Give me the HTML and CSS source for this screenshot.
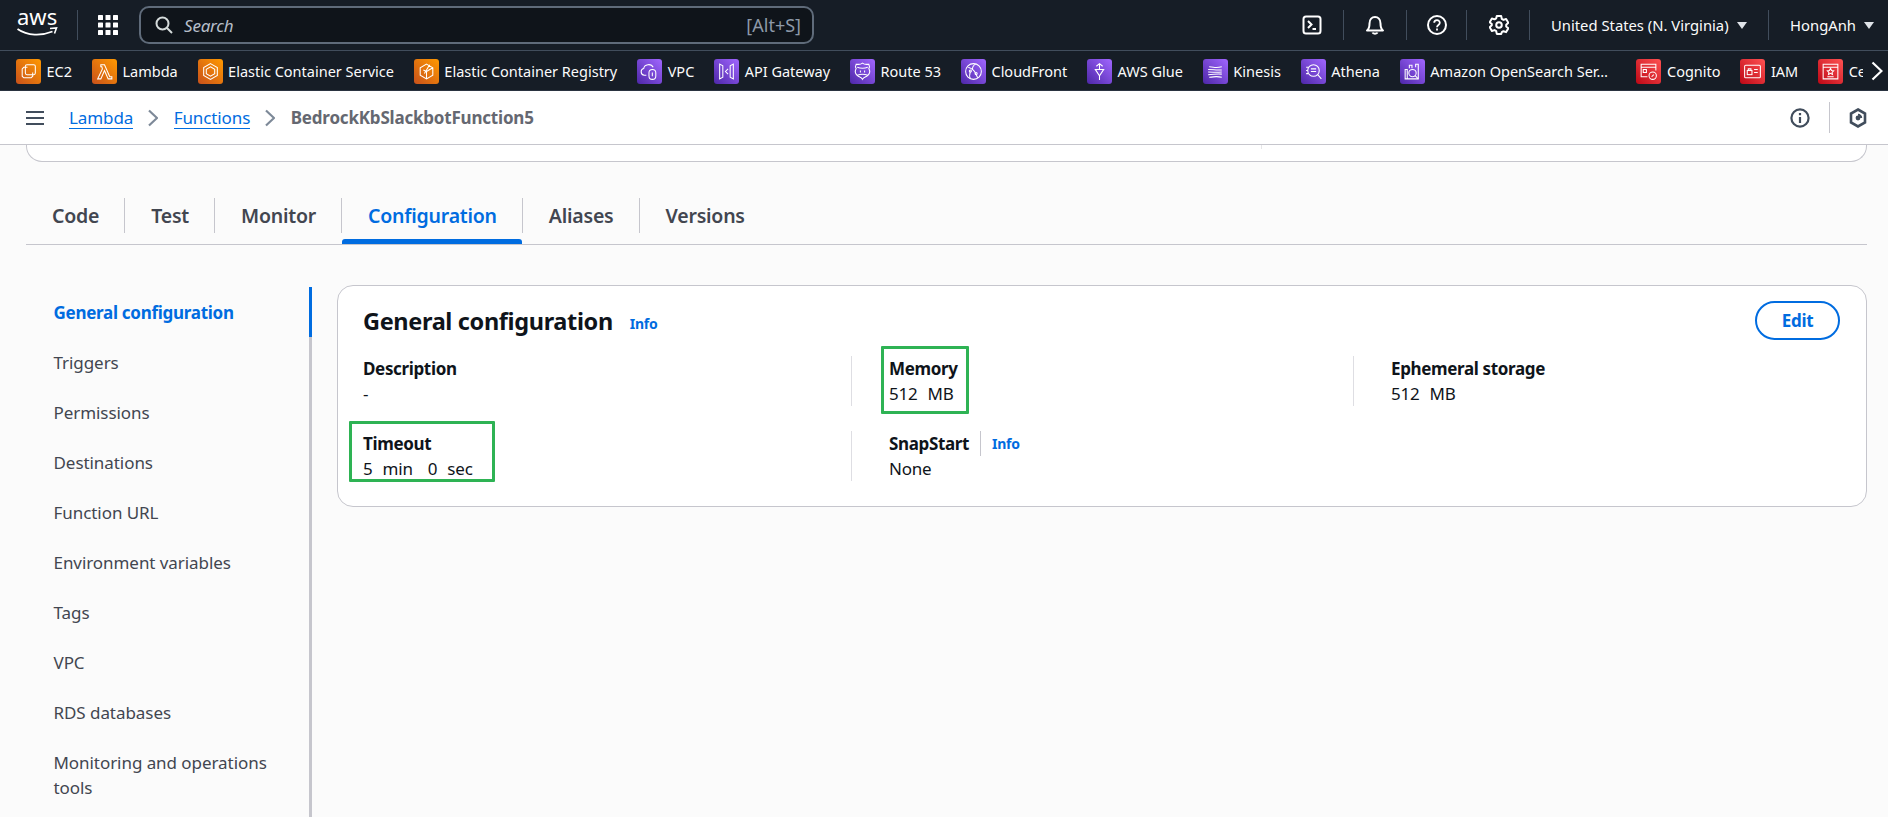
FILE: index.html
```html
<!DOCTYPE html>
<html lang="en">
<head>
<meta charset="utf-8">
<title>Lambda</title>
<link rel="stylesheet" href="styles.css">
</head>
<body>
<header class="topnav">
  <svg class="aws" viewBox="0 0 42 50" width="42" height="50"><text x="0" y="25" class="awstxt">aws</text><path d="M0.500 29c10 7 24 7 35 2.500" fill="none" stroke="#fff" stroke-width="1.800"/><path d="M33 28.500l6.500-.5-2 5.500" fill="none" stroke="#fff" stroke-width="1.600"/></svg>
  <span class="sep sep-logo"></span>
  <svg class="grid" width="20" height="20" viewBox="0 0 20 20" fill="#fff"><rect width="5" height="5" rx=".6"/><rect x="7.500" width="5" height="5" rx=".6"/><rect x="15" width="5" height="5" rx=".6"/><rect y="7.500" width="5" height="5" rx=".6"/><rect x="7.500" y="7.500" width="5" height="5" rx=".6"/><rect x="15" y="7.500" width="5" height="5" rx=".6"/><rect y="15" width="5" height="5" rx=".6"/><rect x="7.500" y="15" width="5" height="5" rx=".6"/><rect x="15" y="15" width="5" height="5" rx=".6"/></svg>
  <div class="search">
    <svg width="18" height="18" viewBox="0 0 18 18" fill="none" stroke="#d5dbdb" stroke-width="2"><circle cx="7.500" cy="7.500" r="6"/><path d="M12 12l5 5"/></svg>
    <span class="search-ph">Search</span>
    <span class="search-key">[Alt+S]</span>
  </div>
  <div class="top-right">
    <svg class="ti" width="20" height="20" viewBox="0 0 20 20" fill="none" stroke="#fff" stroke-width="2"><rect x="1.500" y="1.500" width="17" height="17" rx="2.500"/><path d="M6 6l3.500 3.500L6 13M10.500 14H14"/></svg>
    <span class="sep"></span>
    <svg class="ti" width="20" height="20" viewBox="0 0 20 20" fill="none" stroke="#fff" stroke-width="2"><path d="M2 15.500c2-1.500 2.500-3 2.500-7C4.500 4.500 7 2 10 2s5.500 2.500 5.500 6.500c0 4 .5 5.500 2.500 7z" stroke-linejoin="round"/><path d="M7.500 17.500c.5 1.500 4.500 1.500 5 0" /></svg>
    <span class="sep"></span>
    <svg class="ti ti-help" width="20" height="20" viewBox="0 0 20 20" fill="none" stroke="#fff" stroke-width="2"><circle cx="10" cy="10" r="9"/><path d="M7.200 7.800c0-3.500 5.600-3.500 5.600 0 0 2.200-2.800 2.200-2.800 4.400" stroke-width="1.800"/><path d="M10 13.500v2" stroke-width="1.800"/></svg>
    <span class="sep"></span>
    <svg class="ti ti-gear" width="20" height="20" viewBox="0 0 18 18" fill="none" stroke="#fff" stroke-width="1.800"><path d="M7 1h4l.5 2.500 1.500.9 2.400-.8 2 3.400-1.900 1.700v1.600l1.900 1.700-2 3.400-2.400-.8-1.500.9L11 17H7l-.5-2.500-1.500-.9-2.400.8-2-3.400 1.900-1.700V8.200L.6 6.500l2-3.400 2.400.8 1.500-.9z" stroke-linejoin="round"/><circle cx="9" cy="9" r="2.500"/></svg>
    <span class="sep"></span>
    <span class="top-link">United States (N. Virginia)<i class="caret"></i></span>
    <span class="sep"></span>
    <span class="top-link top-link-last">HongAnh<i class="caret"></i></span>
  </div>
</header>

<nav class="favs">
  <a class="fav"><span class="fi o"><svg viewBox="0 0 20 20"><path d="M9 6H5.500L4 7.500v7L5.500 16h7l1.500-1.500V11"/><rect x="7" y="3.500" width="9.500" height="9.500" rx="1.500"/></svg></span>EC2</a>
  <a class="fav"><span class="fi o"><svg viewBox="0 0 20 20"><path d="M6.500 3.500H10l5 11.500h2v2h-3.500L10 9l-3.500 8H3.500L8 7.500 7.500 5.500h-1z"/></svg></span>Lambda</a>
  <a class="fav"><span class="fi o"><svg viewBox="0 0 20 20"><path d="M10 2.500l6.500 3.800v7.400L10 17.500l-6.500-3.800V6.300z"/><path d="M10 5.500l4 2.300v4.400l-4 2.300-4-2.300V7.800z"/></svg></span>Elastic Container Service</a>
  <a class="fav"><span class="fi o"><svg viewBox="0 0 20 20"><path d="M10 3l6 3.500v7L10 17l-6-3.500v-7zM10 10l6-3.500M10 10v7M7 8.500l3 1.500M13 3.500L8 12"/></svg></span>Elastic Container Registry</a>
  <a class="fav"><span class="fi p"><svg viewBox="0 0 20 20"><path d="M7 13.500H5a3.200 3.200 0 0 1-.5-6.300C5 3 11.500 2 13.500 6"/><rect x="9.500" y="8" width="6.500" height="9.500" rx="3.200"/><path d="M12.700 11v3.500"/></svg></span>VPC</a>
  <a class="fav"><span class="fi p"><svg viewBox="0 0 20 20"><path d="M3.500 3v14l3-1.500v-11zM16.500 3v14l-3-1.500v-11zM11.500 7.500L9 10l2.500 2.500"/></svg></span>API Gateway</a>
  <a class="fav"><span class="fi p"><svg viewBox="0 0 20 20"><path d="M10 2c1.500 1.200 3.500 1.500 6 1 .8 1.500.8 3 0 4 1.500 3 .5 6-2 7.500-1.500.8-3 1-4 3-1-2-2.500-2.200-4-3-2.500-1.500-3.500-4.500-2-7.500-.8-1-.8-2.500 0-4 2.500.5 4.500.2 6-1z"/><path d="M5 6c3 1 7 1 10 0M5 13.500c3-1 7-1 10 0M8 9v2M12 9v2"/></svg></span>Route 53</a>
  <a class="fav"><span class="fi p"><svg viewBox="0 0 20 20"><circle cx="10" cy="10" r="7.500"/><path d="M5 6c3 1 6 3 7 6l2 4M7 10c-1 3-1 5 0 7M12 3c-2 1-3 3-3 5"/><circle cx="7" cy="9.500" r="1"/><circle cx="12.500" cy="12" r="1"/></svg></span>CloudFront</a>
  <a class="fav"><span class="fi p"><svg viewBox="0 0 20 20"><path d="M6 8h8l-4 6zM10 14v4M10 8V3M7 5l3-2.500L13 5"/></svg></span>AWS Glue</a>
  <a class="fav"><span class="fi p"><svg viewBox="0 0 20 20"><path d="M4 5.500c5 0 5 1.500 12 0M3 8c6 0 6 1 13 .5M3 10.500c6 0 6 .5 13 0M3 13c6 0 6-1 13-.5M4 15.500c5 0 5-1.500 12 0"/></svg></span>Kinesis</a>
  <a class="fav"><span class="fi p"><svg viewBox="0 0 20 20"><circle cx="10" cy="9" r="5.500"/><path d="M14 13l3.500 4M7.500 7.500h5M7.500 10h5M3 6h2M3 9h1.500M3 12h2"/></svg></span>Athena</a>
  <a class="fav fav-os"><span class="fi p"><svg viewBox="0 0 20 20"><path d="M3 17V8h2v9zM7 7V4h2.500v3M13 6V3h2.500v14H3"/><circle cx="10" cy="11.500" r="3.500"/><path d="M12.500 14l3 3"/></svg></span>Amazon OpenSearch Ser…</a>
  <a class="fav"><span class="fi r"><svg viewBox="0 0 20 20"><path d="M9 15H3V3h14v6M3 6h14M5 8h3v3H5z"/><circle cx="14" cy="14" r="3.500"/><path d="M13 15l2-2"/></svg></span>Cognito</a>
  <a class="fav"><span class="fi r"><svg viewBox="0 0 20 20"><rect x="2.500" y="4" width="15" height="12" rx="1"/><rect x="5" y="9" width="4.500" height="4"/><path d="M6 9V7.500h2.500V9M11.500 8H15M11.500 11H15"/></svg></span>IAM</a>
  <a class="fav fav-last"><span class="fi r"><svg viewBox="0 0 20 20"><path d="M3 3h14v14H3zM3 6h14M7 15h6"/><path d="M10 7l1 2 2 .3-1.500 1.500.4 2-1.900-1-1.900 1 .4-2L7 9.300l2-.3z"/></svg></span>Ce</a>
  <svg class="fav-more" width="12" height="20" viewBox="0 0 12 20" fill="none" stroke="#fff" stroke-width="2.200"><path d="M1.500 1.500l9 8.500-9 8.500"/></svg>
</nav>

<div class="crumbs">
  <svg class="burger" width="18" height="16" viewBox="0 0 18 16" fill="none" stroke="#414d5c" stroke-width="2.200"><path d="M0 2h18M0 8h18M0 14h18"/></svg>
  <a class="crumb-link">Lambda</a>
  <svg class="chev" width="10" height="18" viewBox="0 0 10 18" fill="none" stroke="#7d8998" stroke-width="2.200"><path d="M1 1.500l8 7.500-8 7.500"/></svg>
  <a class="crumb-link">Functions</a>
  <svg class="chev" width="10" height="18" viewBox="0 0 10 18" fill="none" stroke="#7d8998" stroke-width="2.200"><path d="M1 1.500l8 7.500-8 7.500"/></svg>
  <span class="crumb-cur">BedrockKbSlackbotFunction5</span>
  <div class="crumb-right">
    <svg width="20" height="20" viewBox="0 0 20 20" fill="none" stroke="#414d5c" stroke-width="2.200"><circle cx="10" cy="10" r="8.600"/><path d="M10 9v6M10 5v2.200"/></svg>
    <span class="crumb-sep"></span>
    <svg width="18" height="20" viewBox="0 0 18 20" fill="none" stroke="#414d5c" stroke-width="2.600"><path d="M9 1.500l7 4v9l-7 4-7-4v-9z"/><circle cx="9" cy="10" r="2.400" fill="#414d5c" stroke="none"/><path d="M9 6.800a3.200 3.200 0 0 1 3.200 3.200" stroke-width="2"/></svg>
  </div>
</div>

<main class="page">
  <div class="prev-card"><span class="prev-div"></span></div>

  <div class="tabs">
    <a class="tab">Code</a>
    <a class="tab">Test</a>
    <a class="tab">Monitor</a>
    <a class="tab tab-on">Configuration</a>
    <a class="tab">Aliases</a>
    <a class="tab tab-last">Versions</a>
  </div>

  <div class="cols">
    <aside class="side">
      <a class="side-item side-on">General configuration</a>
      <a class="side-item">Triggers</a>
      <a class="side-item">Permissions</a>
      <a class="side-item">Destinations</a>
      <a class="side-item">Function URL</a>
      <a class="side-item">Environment variables</a>
      <a class="side-item">Tags</a>
      <a class="side-item">VPC</a>
      <a class="side-item">RDS databases</a>
      <a class="side-item">Monitoring and operations tools</a>
    </aside>

    <section class="card">
      <div class="card-head">
        <h2>General configuration</h2>
        <a class="info info-head">Info</a>
        <a class="edit">Edit</a>
      </div>
      <div class="kv-grid">
        <div class="kv kv-first"><div class="k">Description</div><div class="v">-</div></div>
        <div class="kv"><div class="k">Memory</div><div class="v">512&nbsp; MB</div><span class="mark mark-mem"></span></div>
        <div class="kv"><div class="k">Ephemeral storage</div><div class="v">512&nbsp; MB</div></div>
        <div class="kv kv-first"><div class="k">Timeout</div><div class="v">5&nbsp; min &nbsp; 0&nbsp; sec</div><span class="mark mark-time"></span></div>
        <div class="kv"><div class="k">SnapStart<span class="k-sep"></span><a class="info">Info</a></div><div class="v">None</div></div>
      </div>
    </section>
  </div>
</main>
</body>
</html>
```
FILE: styles.css
```css
* { box-sizing: border-box; }
html, body { margin: 0; height: 817px; overflow: hidden; }
body { font-family: "Noto Sans", "Open Sans", sans-serif; background: #fbfbfb; color: #000716; font-size: 16px; }
a { text-decoration: none; }

.topnav { height: 50px; background: #161d26; display: flex; align-items: center; padding-left: 17px; color: #fff; }
.aws { flex: none; width: 42px; }
.awstxt { font: 400 22px "Noto Sans", sans-serif; fill: #fff; }
.sep { width: 1px; height: 30px; background: #414d5c; flex: none; }
.sep-logo { margin-left: 18px; }
.grid { margin-left: 20px; flex: none; }
.search { width: 675px; height: 38px; margin-left: 21px; background: #0f141a; border: 2px solid #5f6b7a; border-radius: 10px; display: flex; align-items: center; padding: 0 11px 0 14px; flex: none; }
.search-ph { font-style: italic; color: #b6bec9; margin-left: 11px; font-size: 17px; letter-spacing: -.2px; }
.search-key { margin-left: auto; color: #8d99a8; font-size: 18px; }
.top-right { margin-left: auto; display: flex; align-items: center; padding-right: 14px; }
.ti { margin: 0 21px; flex: none; }
.ti-help { margin: 0 19px 0 20px; }
.ti-gear { margin: 0 20px 0 22px; }
.top-link { font-size: 14.800px; padding-left: 21px; padding-right: 21.500px; display: flex; align-items: center; color: #fbfbfb; }
.top-link-last { padding-right: 0; }
.caret { width: 0; height: 0; border: 5px solid transparent; border-top: 7px solid #dfe3e8; border-bottom: 0; margin-left: 8px; }

.favs { height: 41px; background: #161d26; border-top: 1px solid #414d5c; border-bottom: 1px solid #2a3340; display: flex; align-items: center; padding: 1px 0 0 16px; position: relative; overflow: hidden; }
.fav { display: flex; align-items: center; color: #fbfbfb; font-size: 14.500px; white-space: nowrap; margin-right: 19.900px; }
.fav-os { margin-right: 28.500px; }
.fi { width: 25px; height: 25px; border-radius: 3px; margin-right: 5.500px; flex: none; display: flex; align-items: center; justify-content: center; }
.fi svg { width: 21px; height: 21px; fill: none; stroke: #fff; stroke-width: 1; }
.o { background: linear-gradient(45deg, #c8511b, #ff9900); }
.p { background: linear-gradient(45deg, #4d27a8, #a166ff); }
.r { background: linear-gradient(45deg, #bd0816, #ff5252); }
.fav-last { margin-right: 0; width: 45px; overflow: hidden; flex: none; }
.fav-more { position: absolute; right: 5px; top: 10px; }

.crumbs { height: 54px; background: #fff; border-bottom: 1px solid #c6c6cd; display: flex; align-items: center; padding-left: 26px; }
.burger { flex: none; margin-right: 25px; }
.crumb-link { color: #006ce0; font-size: 17px; letter-spacing: -.1px; border-bottom: 1px solid #006ce0; line-height: 21px; }
.chev { margin: 0 16px 0 14.500px; flex: none; }
.crumb-cur { color: #656871; font-weight: 700; font-size: 17px; letter-spacing: -.2px; }
.crumb-right { margin-left: auto; display: flex; align-items: center; padding-right: 21px; }
.crumb-sep { width: 1px; height: 31px; background: #c6c6cd; margin: 0 19px; }

.page { padding: 0 21px 0 26px; height: 672px; overflow: hidden; }
.prev-card { height: 17px; background: #fff; border: 1px solid #c6c6cd; border-top: 0; border-radius: 0 0 16px 16px; display: flex; justify-content: flex-end; }
.prev-div { width: 1px; height: 4px; background: #e6e6e8; margin-right: 604px; }

.tabs { margin-top: 36px; height: 47px; border-bottom: 1px solid #c6c6cd; display: flex; }
.tab { height: 35px; padding: 0 25px 0 26px; font-weight: 600; font-size: 19.500px; letter-spacing: -.22px; line-height: 36px; color: #424650; border-right: 1px solid #c6c6cd; position: relative; }
.tab-last { border-right: 0; }
.tab-on { color: #006ce0; }
.tab-on::after { content: ""; position: absolute; left: 0; right: 0; bottom: -11px; height: 5px; background: #006ce0; border-radius: 3px 3px 0 0; }

.cols { display: flex; margin-top: 42px; align-items: flex-start; }
.side { width: 286px; flex: none; height: 530px; border-right: 3px solid #c6c6cd; position: relative; padding: 13px 20px 0 27.500px; }
.side::before { content: ""; position: absolute; right: -3px; top: 0; width: 3px; height: 50px; background: #006ce0; }
.side-item { display: block; font-size: 17px; letter-spacing: -.06px; line-height: 25px; color: #424650; margin-bottom: 25px; }
.side-on { color: #006ce0; font-weight: 700; letter-spacing: -.28px; }

.card { flex: 1; height: 222px; margin-left: 25px; margin-top: -2px; background: #fff; border: 1px solid #c6c6cd; border-radius: 16px; padding: 0 26px 0 25px; }
.card-head { display: flex; align-items: center; height: 70px; position: relative; padding-bottom: 1px; }
.card-head h2 { margin: 0; font-size: 23.500px; font-weight: 700; letter-spacing: -.35px; color: #0f141a; }
.info { color: #006ce0; font-size: 14px; font-weight: 700; letter-spacing: -.3px; }
.info-head { margin-left: 17px; margin-top: 5px; }
.edit { position: absolute; right: 0; top: 15px; width: 85px; height: 39px; border: 2px solid #006ce0; border-radius: 20px; color: #006ce0; font-weight: 700; font-size: 17px; letter-spacing: -.3px; display: flex; align-items: center; justify-content: center; }

.kv-grid { display: grid; grid-template-columns: 488px 502px 1fr; row-gap: 25px; }
.kv { border-left: 1px solid #dedee3; padding-left: 37px; height: 50px; position: relative; }
.kv-first { border-left: 0; padding-left: 0; }
.k { font-weight: 700; font-size: 17px; letter-spacing: -.35px; line-height: 25px; color: #0f141a; display: flex; align-items: center; }
.v { font-size: 17px; letter-spacing: -.2px; word-spacing: .8px; line-height: 25px; color: #0f141a; }
.k-sep { width: 1px; height: 25px; background: #c6c6cd; margin: 0 11px; }
.mark { position: absolute; border: 3px solid #2eb354; pointer-events: none; border-radius: 1px; }
.mark-mem { left: 29px; top: -10px; width: 88px; height: 68px; }
.mark-time { left: -14px; top: -10px; width: 146px; height: 61px; }
```
